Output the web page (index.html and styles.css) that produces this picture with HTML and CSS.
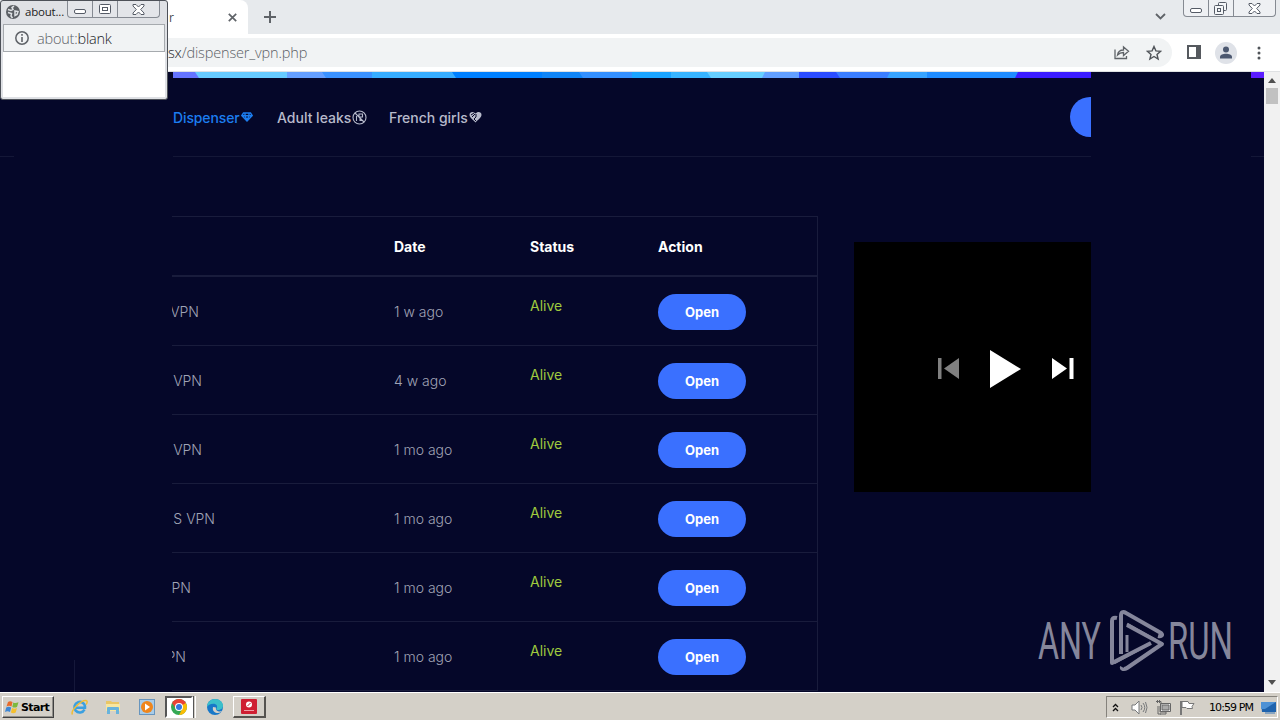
FILE: index.html
```html
<!DOCTYPE html>
<html lang="en">
<head>
<meta charset="utf-8">
<title>Dispenser</title>
<link rel="stylesheet" href="styles.css">
</head>
<body>
<div class="desktop">
  <header class="tabstrip">
    <div class="tab"><span class="tab-title">r</span>
      <svg class="tab-close" width="9" height="9" viewBox="0 0 9 9"><path d="M.8.8l7.4 7.4M8.200.8L.8 8.200" stroke="#5f6368" stroke-width="1.700"/></svg>
    </div>
    <svg class="new-tab" width="14" height="14" viewBox="0 0 14 14"><path d="M7 1v12M1 7h12" stroke="#5f6368" stroke-width="2"/></svg>
    <svg class="tab-search" width="11" height="8" viewBox="0 0 11 8"><path d="M1 1l4.500 4.500L10 1" fill="none" stroke="#5f6368" stroke-width="1.800"/></svg>
    <div class="caption-buttons main-caption">
      <span class="cap cap-min"><svg width="12" height="5"><rect x=".5" y=".5" width="11" height="4" rx="1.500" fill="#fff" stroke="#555b66"/></svg></span>
      <span class="cap cap-max"><svg width="14" height="13" fill="#f4f6f8" stroke="#555b66"><rect x="4.500" y=".5" width="8" height="8" rx="1"/><rect x=".5" y="3.500" width="9" height="9" rx="1"/><rect x="3.500" y="6.500" width="3" height="3"/></svg></span>
      <span class="cap cap-close"><svg width="13" height="11" viewBox="0 0 13 11"><path d="M1 .5h3L6.500 3 9 .5h3v1.500L8.700 5.500 12 9v1.500H9L6.500 8 4 10.500H1V9l3.300-3.500L1 2z" fill="#fff" stroke="#555b66"/></svg></span>
    </div>
  </header>

  <div class="toolbar">
    <div class="omnibox">
      <span class="url"><b>sx</b>/dispenser_vpn.php</span>
      <svg class="share" width="16" height="15" viewBox="0 0 16 15" fill="none" stroke="#5f6368" stroke-width="1.300"><path d="M1 4.500v9h11.500v-2.500M3.500 10c.6-3.500 3-5 6-5V2l5 4.300-5 4.200V7.500c-2.500 0-4.300.7-6 2.500z"/></svg>
      <svg class="star" width="16" height="16" viewBox="0 0 16 16"><path d="M8 1.500l1.900 4.400 4.700.4-3.600 3.100 1.100 4.600L8 11.500 3.900 14 5 9.400 1.400 6.300l4.700-.4z" fill="none" stroke="#505459" stroke-width="1.400"/></svg>
    </div>
    <svg class="side-panel" width="14" height="14"><path d="M1 1h12v12H1z" fill="#fff" stroke="#55595e" stroke-width="2"/><path d="M9 0h5v14H9z" fill="#55595e"/></svg>
    <svg class="avatar" width="22" height="22"><circle cx="11" cy="11" r="11" fill="#dfe2e8"/><circle cx="11" cy="7.500" r="3" fill="#4c5870"/><path d="M5 16.500v-1.500c0-2 3-3.200 6-3.200s6 1.200 6 3.200v1.500z" fill="#4c5870"/></svg>
    <svg class="kebab" width="4" height="14" fill="#505459"><circle cx="2" cy="2" r="1.500"/><circle cx="2" cy="7" r="1.500"/><circle cx="2" cy="12" r="1.500"/></svg>
  </div>

  <div class="viewport">
    <main class="page">
      <svg class="ribbon" width="1264" height="6">
        <path d="M173 0h30v6h-30z" fill="#6574ff"/><path d="M195 0h95v6h-91z" fill="#67cbff"/>
        <path d="M287 0h40v6h-40z" fill="#659fff"/><path d="M322 0h60v6h-56z" fill="#3b92ff"/>
        <path d="M372 0h90v6h-90z" fill="#37adff"/><path d="M452 0h100v6h-96z" fill="#0080ff"/>
        <path d="M542 0h45v6h-45z" fill="#1085f7"/><path d="M579 0h60v6h-56z" fill="#3490ff"/>
        <path d="M632 0h40v6h-40z" fill="#1ba4ff"/><path d="M671 0h45v6h-45z" fill="#38b4ff"/>
        <path d="M707 0h60v6h-56z" fill="#67cfff"/><path d="M765 0h35v6h-38z" fill="#629fff"/>
        <path d="M799 0h45v6h-45z" fill="#2b4cff"/><path d="M836 0h60v6h-56z" fill="#3b7eff"/>
        <path d="M890 0h37v6h-40z" fill="#38a4ff"/><path d="M927 0h95v6h-95z" fill="#208cff"/>
        <path d="M1018 0h73v6h-76z" fill="#3b1cff"/><path d="M1251 0h13v6h-13z" fill="#5b1cff"/>
      </svg>
      <nav class="nav">
        <a class="nav-link active"><span class="nav-a">Dispenser</span><svg width="12" height="10" viewBox="0 0 12 10" fill="none" stroke="#1c7df0" stroke-width="1.400"><path d="M2.500 1h7L11.200 3.500 6 9 .8 3.500zM1 3.700h10M4 4l2 4 2-4M4 1v2.500M8 1v2.500"/></svg></a>
        <a class="nav-link"><span class="nav-b">Adult leaks</span><svg width="15" height="15" viewBox="0 0 15 15" fill="none" stroke="#b7bacb" stroke-width="1.100"><circle cx="7.500" cy="7.500" r="6.500"/><path d="M3 3l9 9M4.500 6v5M7 4h3.500v3H7zM8 8v2.500h3"/></svg></a>
        <a class="nav-link"><span class="nav-c">French girls</span><svg width="13" height="12" viewBox="0 0 13 12"><path d="M6.500 11.500C5 9.500.5 7 .5 3.800.5.500 4.500 0 6.500 2.500 8.500 0 12.500.5 12.500 3.800c0 3.200-4.500 5.700-6 7.700z" fill="#b7bacb"/><path d="M2 4l3-2M3 6l3-3M7 3v3l-2 2 2 2" stroke="#050727" fill="none"/></svg></a>
        <span class="nav-button"></span>
      </nav>
      <div class="content">
        <section class="table">
          <div class="row head"><span></span><span class="h-date">Date</span><span class="h-status">Status</span><span class="h-action">Action</span></div>
          <div class="row"><span class="name" style="width:27px"><i>VPN</i></span><span class="date">1 w ago</span><span class="status">Alive</span><a class="open">Open</a></div>
          <div class="row"><span class="name" style="width:30px"><i>VPN</i></span><span class="date">4 w ago</span><span class="status">Alive</span><a class="open">Open</a></div>
          <div class="row"><span class="name" style="width:30px"><i>VPN</i></span><span class="date">1 mo ago</span><span class="status">Alive</span><a class="open">Open</a></div>
          <div class="row"><span class="name" style="width:43px"><i>S VPN</i></span><span class="date">1 mo ago</span><span class="status">Alive</span><a class="open">Open</a></div>
          <div class="row"><span class="name" style="width:19px"><i>PN</i></span><span class="date">1 mo ago</span><span class="status">Alive</span><a class="open">Open</a></div>
          <div class="row"><span class="name" style="width:14px"><i>PN</i></span><span class="date">1 mo ago</span><span class="status">Alive</span><a class="open">Open</a></div>
        </section>
        <div class="player">
          <svg width="237" height="250" fill="#fff"><path d="M84 116h3.500v21H84zM105 116v21l-15-10.500z" fill="#808080"/><path d="M136 108v38l31-19zM198 116v21l15-10.500zM215.500 116h4v21h-4z"/></svg>
        </div>
      </div>
      <span class="table-edge"></span>
      <span class="nav-edge nav-edge-left"></span>
      <span class="nav-edge nav-edge-right"></span>
      <svg class="watermark" width="194" height="64" viewBox="1038 609 194 64">
        <g class="mark-text"><text x="1038" y="659" textLength="63" lengthAdjust="spacingAndGlyphs">ANY</text><text x="1168" y="659" textLength="65" lengthAdjust="spacingAndGlyphs">RUN</text></g>
        <g fill="none" stroke="#85869b" stroke-width="4" stroke-linejoin="round"><path d="M1117 618c-4-1-5 1-5 3v42l39-20"/><path d="M1121 654v-38c0-4 2-5 5-3l35 20c2 2 1 4-3 3"/><path d="M1127 625l35 19-35 24c-3 2-6 1-5-1"/><path d="M1127 635v17M1114 663l35-19M1127 624l28 16" stroke-width="3"/></g>
      </svg>
    </main>
    <div class="scrollbar"><i class="arrow up"></i><i class="thumb"></i><i class="arrow down"></i></div>
  </div>

  <footer class="taskbar">
    <div class="start"><svg width="15" height="15" viewBox="0 0 15 15"><path d="M3 2q2-1.500 4.500 0L6.500 6.500Q4 5 1.500 6.500z" fill="#e86b2a"/><path d="M8.300 2.500q2 1.300 5.200-.2L12 7q-2.500 1-4.700 0z" fill="#7db93c"/><path d="M1.200 7.500q2.600-1.300 5 0L5 12Q2.500 10.600 0 12z" fill="#3d87d5"/><path d="M7 8q2.500 1.300 5 0l-1.300 4.500q-2.500 1.300-4.800 0z" fill="#f5c02e"/></svg><span>Start</span></div>
    <svg class="ti ie" width="17" height="17" viewBox="0 0 17 17" fill="none"><path d="M13.500 10.500A5.300 5.300 0 1 1 14 8.700H5" stroke="#3ba0e0" stroke-width="2.600"/><path d="M1.500 15.500C-1 12 10 1 15 1.500c2 .3 1 3 0 4" stroke="#f0bd35" stroke-width="1.500"/></svg>
    <svg class="ti folder" width="16" height="16"><path d="M1 2h5l1 1h7v5H1z" fill="#e9c666"/><path d="M1 5h14v7H1z" fill="#f7e6a0"/><path d="M2 15V9q0-1 1-1h10q1 0 1 1v6h-3v-4H5v4z" fill="#68b3dc"/></svg>
    <svg class="ti media" width="16" height="16"><rect x=".5" y=".5" width="15" height="15" fill="#a8cce8" stroke="#6795be"/><circle cx="8" cy="8" r="6" fill="#ef861c"/><path d="M6 4.500v7l5-3.500z" fill="#fff"/></svg>
    <span class="task pressed"><svg width="16" height="16" viewBox="0 0 16 16"><circle cx="8" cy="8" r="8" fill="#34a853"/><path d="M1.100 4A8 8 0 0 1 14.900 4L8 8z" fill="#ea4335"/><path d="M14.900 4A8 8 0 0 1 8 16L11.500 9.500 8 4z" fill="#fbbc04"/><path d="M1.100 4L5 10l3-2 6.900-4z" fill="#ea4335"/><circle cx="8" cy="8" r="4" fill="#fff"/><circle cx="8" cy="8" r="3" fill="#3477e0"/></svg></span>
    <span class="task-edge"></span>
    <svg class="ti edge" width="16" height="16" viewBox="0 0 16 16"><circle cx="8" cy="8" r="8" fill="#1878c8"/><path d="M0 8C0 3 4 0 8 0c5 0 8 3.500 8 6.500S13.500 11 11 11c-2 0-2-1-1.200-2C11 7 9 4.800 6.500 4.800 3 4.800 1 6.500 0 8z" fill="#3bbfca"/><path d="M6 8c-1 4 2 6 5 6 2 0 3-.8 4-2-2 1-7 .5-6-3.500z" fill="#d4d0c8"/></svg>
    <span class="task raised"><svg width="16" height="15"><rect width="16" height="15" rx="1" fill="#cf1f32"/><circle cx="8" cy="5.500" r="3" fill="#fff"/><path d="M6.500 7l3-3" stroke="#cf1f32"/><path d="M3 11.500h10" stroke="#f0a0a8"/></svg></span>
    <div class="tray">
      <svg class="chev" width="7" height="9" viewBox="0 0 7 9" fill="none" stroke="#111" stroke-width="1.300"><path d="M1 4l2.500-2.500L6 4M1 8l2.500-2.500L6 8"/></svg>
      <svg class="vol" width="17" height="15" viewBox="0 0 17 15" fill="none" stroke="#77797b"><path d="M1 5h3l4-4v13l-4-4H1z" fill="#fff"/><path d="M10 5q2 2.500 0 5M12 3q3.500 4.500 0 9M14.500 2q3 5.500 0 11"/></svg>
      <svg class="net" width="16" height="15" viewBox="0 0 16 15" stroke="#666"><path d="M5.500 3.500h10v8h-10z" fill="#eee"/><path d="M7 5h7v5H7z" fill="#aaa"/><path d="M1 1.500h5V5l-1 1v6h6v2H5M2.500 0v3M4.500 0v3M3 6v8h3" fill="none"/></svg>
      <svg class="flag" width="17" height="15" viewBox="0 0 17 15"><path d="M2 1v14" stroke="#777" stroke-width="2"/><path d="M3 1.500h6l1 2h5l-2 3 .5 2H8l-1-1H3z" fill="#fff" stroke="#777"/></svg>
      <span class="clock">10:59 PM</span>
      <svg class="show-desktop" width="16" height="13"><path d="M0 1h15v10H1z" fill="#1f63ad"/><path d="M0 1h15L4 8H0z" fill="#4d91d5"/><path d="M4 12h10" stroke="#87a4c0" stroke-width="2"/></svg>
    </div>
  </footer>

  <aside class="popup">
    <div class="popup-title">
      <svg class="globe" width="14" height="14" viewBox="0 0 14 14"><circle cx="7" cy="7" r="7" fill="#5b5f64"/><path d="M2 4.500l3 1 2-1-1-2 2-1.300M2 7.500l3.500 1L5 11l1.500 2M9 6l3 .5-1 3-2 1z" fill="none" stroke="#dfe2e5" stroke-width="1.500"/></svg>
      <span class="popup-name">about...</span>
      <div class="caption-buttons popup-caption">
        <span class="cap cap-min"><svg width="12" height="5"><rect x=".5" y=".5" width="11" height="4" rx="1.500" fill="#fff" stroke="#555b66"/></svg></span>
        <span class="cap cap-max"><svg width="12" height="10" fill="#fff" stroke="#555b66"><rect x=".5" y=".5" width="11" height="9" rx="1"/><rect x="3.500" y="3.500" width="5" height="3"/></svg></span>
        <span class="cap cap-close"><svg width="13" height="11" viewBox="0 0 13 11"><path d="M1 .5h3L6.500 3 9 .5h3v1.500L8.700 5.500 12 9v1.500H9L6.500 8 4 10.500H1V9l3.300-3.500L1 2z" fill="#fff" stroke="#555b66"/></svg></span>
      </div>
    </div>
    <div class="popup-bar"><svg width="14" height="14"><circle cx="7" cy="7" r="6.200" fill="none" stroke="#5f6368" stroke-width="1.500"/><path d="M7 6v5M7 3v1.700" stroke="#5f6368" stroke-width="1.600"/></svg><span>about:<b>blank</b></span></div>
    <div class="popup-body"></div>
  </aside>
</div>
</body>
</html>
```
FILE: styles.css
```css
* { box-sizing: border-box; }
body { margin: 0; overflow: hidden; font-family: Inter, "Liberation Sans", sans-serif; }
svg { display: block; flex: none; }
b, i { font: inherit; }
.desktop { position: relative; width: 1280px; height: 720px; display: grid; grid-template-rows: 34px 38px 620px 28px; background: #050729; }

.tabstrip { background: #e7eaed; display: flex; padding-left: 100px; }
.tab { width: 148px; background: #fff; border-radius: 0 8px 0 0; display: flex; padding: 0 17px 0 69px; align-items: center; justify-content: space-between; }
.tab-title { font: 12px "Open Sans", sans-serif; color: #45494d; margin-top: 1px; }
.tab-close { margin-right: -5px; }
.new-tab { margin: 10px 0 0 15px; }
.tab-search { margin: 13px 17px 0 auto; }
.tab-close { margin-right: -6px; }
.caption-buttons { display: flex; border: 1px solid #858a92; border-top: 0; border-radius: 0 0 4px 4px; background: #eef0f3; }
.main-caption { width: 93px; height: 17px; margin-right: 4px; }
.cap { display: flex; justify-content: center; align-items: center; border-right: 1px solid #858a92; }
.cap:last-child { border: 0; flex: 1; }
.cap-min { width: 25px; padding-top: 4px; }
.cap-max { width: 25px; }

.toolbar { background: #fff; border-bottom: 1px solid #dfe1e3; display: flex; padding-top: 4px; }
.omnibox { width: 1172px; height: 29px; background: #f1f3f4; border-radius: 0 15px 15px 0; display: flex; align-items: center; padding-left: 168px; }
.url { font: 300 14.500px "Open Sans", sans-serif; color: #5c6166; letter-spacing: -.15px; margin-top: -1px; }
.url b { color: #202124; }
.share { margin: 0 16px 0 auto; }
.star { margin-right: 10px; }
.side-panel { margin: 7px 0 0 15px; }
.avatar { margin: 4px 0 0 14px; }
.kebab { margin: 8px 0 0 20px; }

.viewport { display: grid; grid-template-columns: 1264px 16px; overflow: hidden; }
.page { position: relative; background: #050729; overflow: hidden; }
.nav { margin-left: 173px; height: 79px; border-bottom: 1px solid #141737; width: 918px; display: flex; align-items: center; overflow: hidden; }
.nav-link { display: flex; align-items: center; color: #b7bacb; font-size: 14px; font-weight: 500; white-space: nowrap; }
.nav-link span { display: block; }
.nav-a { width: 68px; letter-spacing: -.12px; }
.nav-b { width: 75px; letter-spacing: 0; }
.nav-c { width: 80px; letter-spacing: 0; }
.nav-link + .nav-link { margin-left: 22px; }
.nav-link.active { color: #1c7df0; }
.nav-link:first-child { margin-right: 2px; }
.nav-button { margin: 0 -19px 0 auto; width: 40px; height: 40px; background: #3a70ff; border-radius: 50%; flex: none; }
.content { display: flex; gap: 36px; padding: 59px 0 0 172px; align-items: flex-start; }
.table { width: 646px; border-top: 1px solid #191c3c; border-right: 1px solid #191c3c; }
.row { display: grid; grid-template-columns: 222px 136px 128px 1fr; align-items: center; height: 69px; border-bottom: 1px solid #191c3c; font-size: 14.500px; color: #a1a4b6; }
.row.head { height: 60px; border-bottom-width: 2px; color: #fff; font-weight: 700; font-size: 14px; }
.name { overflow: hidden; display: flex; justify-content: flex-end; white-space: nowrap; margin-left: 0; font-size: 14px; font-weight: 300; }
.name i { flex: none; }
.date { font-weight: 300; font-size: 14px; }
.status { color: #9fca3e; margin-top: -11px; font-size: 14px; }
.open { display: flex; align-items: center; justify-content: center; width: 88px; height: 36px; border-radius: 18px; background: #3a70ff; color: #fff; font-size: 13px; font-weight: 700; margin-top: 1px; }
.player { width: 237px; height: 250px; margin-top: 26px; background: #000; }
.table-edge { position: absolute; left: 74px; top: 588px; width: 1px; height: 32px; background: #15183a; }
.nav-edge { position: absolute; top: 84px; height: 1px; background: #141737; }
.nav-edge-left { left: 0; width: 14px; }
.nav-edge-right { left: 1251px; width: 13px; }
.watermark { position: absolute; left: 1038px; top: 537px; overflow: visible; }
.mark-text { font: 52px Roboto, sans-serif; fill: #85869b; }
.scrollbar { background: #f1f1f1; display: flex; flex-direction: column; align-items: center; }
.arrow { border: 4px solid transparent; width: 0; height: 0; }
.up { border-bottom: 5px solid #505050; margin-top: 2px; }
.thumb { width: 12px; height: 16px; background: #c1c1c1; margin-top: 5px; }
.down { border-top: 5px solid #505050; margin: auto 0 3px; }

.taskbar { background: #d4d0c8; border-top: 1px solid #fff; display: flex; align-items: flex-start; padding: 3px 2px 0; }
.start { width: 52px; height: 22px; display: flex; align-items: center; gap: 1px; padding-left: 2px; border: 1px solid #fff; border-right-color: #404040; border-bottom-color: #404040; box-shadow: inset -1px -1px #918f8a; font: 700 11px "DejaVu Sans", sans-serif; letter-spacing: -.65px; color: #000; white-space: nowrap; }
.ti { margin-top: 3px; }
.ie { margin-left: 17px; }
.folder { margin-left: 17px; }
.media { margin-left: 18px; }
.task { height: 22px; display: flex; align-items: center; justify-content: center; }
.pressed { width: 28px; margin-left: 10px; background: #fff; border: 2px solid #555; border-right-color: #fff; border-bottom-color: #fff; }
.task-edge { width: 3px; height: 22px; border-right: 1px solid #fff; border-left: 1px solid #555; }
.edge { margin-left: 11px; }
.raised { width: 33px; margin-left: 10px; border: 1px solid #fff; border-right: 2px solid #55534f; border-bottom: 2px solid #55534f; }
.tray { width: 172px; height: 22px; margin-left: auto; display: flex; align-items: center; border: 1px solid #85827c; border-right-color: #fff; border-bottom-color: #fff; padding-left: 5px; }
.vol { margin-left: 12px; }
.net { margin-left: 7px; }
.flag { margin-left: 8px; }
.clock { margin-left: 13px; width: 46px; font: 11px "DejaVu Sans", sans-serif; letter-spacing: -.9px; white-space: nowrap; color: #000; }
.show-desktop { margin-left: 8px; }

.popup { position: absolute; left: 0; top: 0; width: 168px; height: 100px; background: #dfe1e5; border: 1px solid #4d5158; border-radius: 3px; padding: 0 2px 2px; display: flex; flex-direction: column; }
.popup-title { height: 23px; display: flex; padding-left: 3px; }
.globe { margin-top: 4px; }
.popup-name { font: 11.500px "Open Sans", sans-serif; color: #222; width: 46px; margin: 3px 0 0 5px; white-space: nowrap; letter-spacing: -.2px; }
.popup-caption { width: 93px; height: 17px; margin: 0 0 0 -4px; flex: none; background: #e3e5e9; }
.popup-bar { height: 28px; background: #f1f3f4; border: 1px solid #a6aaae; display: flex; align-items: center; gap: 8px; padding-left: 11px; font: 300 14.500px "Open Sans", sans-serif; color: #5c6166; letter-spacing: -.2px; }
.popup-bar b { color: #202124; }
.popup-body { background: #fff; flex: 1; }
```
